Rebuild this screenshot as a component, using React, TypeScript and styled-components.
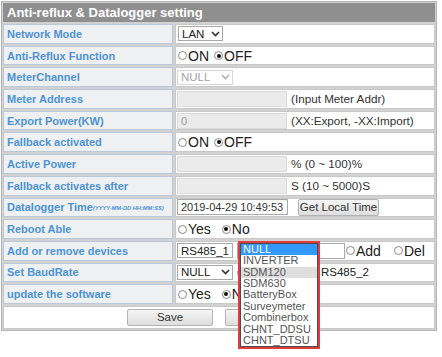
import React from "react";
import styled, { createGlobalStyle } from "styled-components";

const GlobalStyle = createGlobalStyle`
  *, *::before, *::after { box-sizing: border-box; }
  html, body { margin: 0; padding: 0; background: #fff; }
  body { font-family: "Liberation Sans", Arial, sans-serif; }
`;

const Page = styled.div`
  padding: 1px 0 0 1px;
  width: 442px;
  min-height: 357px;
`;

const Table = styled.div`
  width: 436px;
  display: grid;
  grid-template-columns: 170px 260px;
  grid-template-rows: 19px repeat(13, 19.7px) 23px;
  gap: 2px;
  padding: 1px;
  border: 1px solid #b4b4b4;
  background: #d2d2d2;
`;

const Header = styled.div`
  grid-column: 1 / -1;
  display: flex;
  align-items: center;
  padding-left: 4px;
  background: #8f8f8f;
  color: #fff;
  font-weight: bold;
  font-size: 13px;
`;

const LabelCell = styled.div`
  display: flex;
  align-items: center;
  background: #eef0f2;
  border: 1px solid #b9c9da;
  padding-left: 3px;
  color: #4d93d6;
  font-weight: bold;
  font-size: 11px;
  white-space: nowrap;
  overflow: hidden;
`;

const TinyNote = styled.span`
  font-size: 5.7px;
  font-style: italic;
  margin-top: 2px;
`;

const ValueCell = styled.div`
  position: relative;
  display: flex;
  align-items: center;
  background: #fff;
  border: 1px solid #c8c8c8;
  padding-left: 1px;
  font-size: 12px;
  color: #333;
  white-space: nowrap;
`;

const SaveCell = styled.div`
  grid-column: 1 / -1;
  display: flex;
  align-items: center;
  justify-content: center;
  gap: 12px;
  background: #fff;
  border: 1px solid #c8c8c8;
`;

const Select = styled.div<{ $w: number; $disabled?: boolean; $ml?: number }>`
  width: ${(p) => p.$w}px;
  height: 15px;
  margin-left: ${(p) => p.$ml ?? 0}px;
  display: flex;
  align-items: center;
  justify-content: space-between;
  border: 1px solid ${(p) => (p.$disabled ? "#d6d6d6" : "#a9a9a9")};
  background: #fff;
  padding: 0 2px 0 3px;
  font-size: 11.5px;
  color: ${(p) => (p.$disabled ? "#a5a5a5" : "#222")};
  svg {
    stroke: ${(p) => (p.$disabled ? "#b0b0b0" : "#333")};
  }
`;

const TextBox = styled.div<{ $w: number; $disabled?: boolean; $ml?: number }>`
  width: ${(p) => p.$w}px;
  height: 16px;
  margin-left: ${(p) => p.$ml ?? 0}px;
  display: flex;
  align-items: center;
  padding-left: 3px;
  border: 1px solid ${(p) => (p.$disabled ? "#dadada" : "#a9a9a9")};
  background: ${(p) => (p.$disabled ? "#ebebeb" : "#fff")};
  font-size: 11px;
  color: ${(p) => (p.$disabled ? "#9a9a9a" : "#333")};
`;

const Hint = styled.span`
  margin-left: 4px;
  font-size: 11.7px;
  color: #333;
`;

const RadioOption = styled.span<{ $mr?: number; $size?: number }>`
  display: inline-flex;
  align-items: center;
  font-size: ${(p) => p.$size ?? 14}px;
  color: #222;
  margin-right: ${(p) => p.$mr ?? 0}px;
`;

const RadioDot = styled.span<{ $checked?: boolean }>`
  position: relative;
  width: 9px;
  height: 9px;
  margin: 0 1px 0 1px;
  border-radius: 50%;
  border: 1px solid #8a8a8a;
  background: #fff;
  &::after {
    content: "";
    display: ${(p) => (p.$checked ? "block" : "none")};
    position: absolute;
    left: 1.5px;
    top: 1.5px;
    width: 4px;
    height: 4px;
    border-radius: 50%;
    background: #111;
  }
`;

const Button = styled.button<{ $w: number; $ml?: number }>`
  width: ${(p) => p.$w}px;
  height: 17px;
  margin-left: ${(p) => p.$ml ?? 0}px;
  padding: 0;
  font-family: inherit;
  font-size: 11.5px;
  color: #333;
  border: 1px solid #b3b3b3;
  border-radius: 2px;
  background: linear-gradient(#f5f5f5, #dedede);
`;

const Dropdown = styled.div`
  position: absolute;
  left: 62px;
  top: -1px;
  z-index: 2;
  width: 82px;
  border: 2px solid #e23b3b;
  background: #fff;
`;

const List = styled.div`
  border: 1px solid #4d4d4d;
  background: #fff;
`;

const Item = styled.div<{ $state?: "active" | "hover" }>`
  height: 11.4px;
  line-height: 11.4px;
  padding-left: 2px;
  font-size: 11px;
  color: ${(p) => (p.$state === "active" ? "#fff" : "#555")};
  background: ${(p) =>
    p.$state === "active" ? "#3399ff" : p.$state === "hover" ? "#dedede" : "#fff"};
`;

const Spacer = styled.span<{ $w: number }>`
  width: ${(p) => p.$w}px;
`;

const Chevron = () => (
  <svg width="9" height="6" viewBox="0 0 9 6" fill="none" strokeWidth="1.6">
    <path d="M1 1 L4.5 4.5 L8 1" />
  </svg>
);

const Radio = ({
  label,
  checked,
  mr,
  size,
}: {
  label: string;
  checked?: boolean;
  mr?: number;
  size?: number;
}) => (
  <RadioOption $mr={mr} $size={size}>
    <RadioDot $checked={checked} />
    {label}
  </RadioOption>
);

const devices = [
  "NULL",
  "INVERTER",
  "SDM120",
  "SDM630",
  "BatteryBox",
  "Surveymeter",
  "Combinerbox",
  "CHNT_DDSU",
  "CHNT_DTSU",
];

export default function App() {
  return (
    <Page>
      <GlobalStyle />
      <Table>
        <Header>Anti-reflux &amp; Datalogger setting</Header>

        <LabelCell>Network Mode</LabelCell>
        <ValueCell>
          <Select $w={45} $ml={1}>
            LAN
            <Chevron />
          </Select>
        </ValueCell>

        <LabelCell>Anti-Reflux Function</LabelCell>
        <ValueCell>
          <Radio label="ON" mr={4} />
          <Radio label="OFF" checked />
        </ValueCell>

        <LabelCell>MeterChannel</LabelCell>
        <ValueCell>
          <Select $w={56} $disabled>
            NULL
            <Chevron />
          </Select>
        </ValueCell>

        <LabelCell>Meter Address</LabelCell>
        <ValueCell>
          <TextBox $w={110} $disabled />
          <Hint>(Input Meter Addr)</Hint>
        </ValueCell>

        <LabelCell>Export Power(KW)</LabelCell>
        <ValueCell>
          <TextBox $w={110} $disabled>
            0
          </TextBox>
          <Hint>(XX:Export, -XX:Import)</Hint>
        </ValueCell>

        <LabelCell>Fallback activated</LabelCell>
        <ValueCell>
          <Radio label="ON" mr={4} />
          <Radio label="OFF" checked />
        </ValueCell>

        <LabelCell>Active Power</LabelCell>
        <ValueCell>
          <TextBox $w={110} $disabled />
          <Hint>% (0 ~ 100)%</Hint>
        </ValueCell>

        <LabelCell>Fallback activates after</LabelCell>
        <ValueCell>
          <TextBox $w={110} $disabled />
          <Hint>S (10 ~ 5000)S</Hint>
        </ValueCell>

        <LabelCell>
          Datalogger Time<TinyNote>(YYYY-MM-DD HH:MM:SS)</TinyNote>
        </LabelCell>
        <ValueCell>
          <TextBox $w={111}>2019-04-29 10:49:53</TextBox>
          <Button $w={81} $ml={10}>
            Get Local Time
          </Button>
        </ValueCell>

        <LabelCell>Reboot Able</LabelCell>
        <ValueCell>
          <Radio label="Yes" mr={10} />
          <Radio label="No" checked />
        </ValueCell>

        <LabelCell>Add or remove devices</LabelCell>
        <ValueCell>
          <Select $w={56}>
            RS485_1
            <Chevron />
          </Select>
          <TextBox $w={108} $ml={4} />
          <Radio label="Add" mr={12} />
          <Radio label="Del" />
          <Dropdown>
            <List>
              {devices.map((d, i) => (
                <Item
                  key={d}
                  $state={i === 0 ? "active" : i === 2 ? "hover" : undefined}
                >
                  {d}
                </Item>
              ))}
            </List>
          </Dropdown>
        </ValueCell>

        <LabelCell>Set BaudRate</LabelCell>
        <ValueCell>
          <Select $w={56}>
            NULL
            <Chevron />
          </Select>
          <Spacer $w={3} />
          <Radio label="RS485_1" mr={15} size={11.5} />
          <Radio label="RS485_2" size={11.5} />
        </ValueCell>

        <LabelCell>update the software</LabelCell>
        <ValueCell>
          <Radio label="Yes" mr={10} />
          <Radio label="No" checked />
        </ValueCell>

        <SaveCell>
          <Button $w={86}>Save</Button>
          <Button $w={86}>Reboot</Button>
        </SaveCell>
      </Table>
    </Page>
  );
}
